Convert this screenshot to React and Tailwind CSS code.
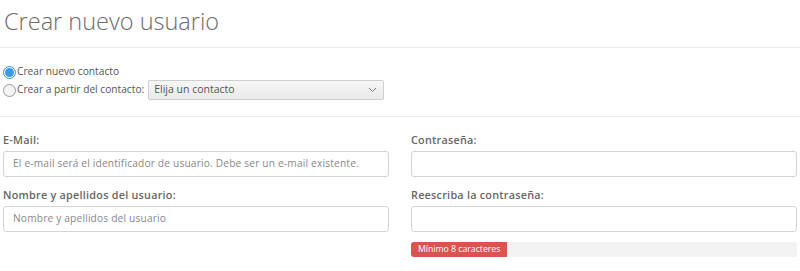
import React from "react";

function Radio({ checked }) {
  return checked ? (
    <span className="w-[13px] h-[13px] rounded-full border border-[#3b8fd6] bg-white flex items-center justify-center shrink-0">
      <span className="w-[9px] h-[9px] rounded-full bg-[#3a9be8]" />
    </span>
  ) : (
    <span className="w-[13px] h-[13px] rounded-full border border-[#9a9a9a] bg-[#f4f4f4] shrink-0" />
  );
}

function Field({ label, placeholder }) {
  return (
    <div className="flex flex-col">
      <div className="h-[14px] leading-[14px] text-[10.8px] font-semibold tracking-[0.25px] text-[#666]">
        {label}
      </div>
      <div className="h-[26px] mt-[4px] border border-[#d4d4d4] rounded-[3px] bg-white flex items-center px-[9px] text-[10.2px] tracking-[0.17px] text-[#888] whitespace-nowrap">
        {placeholder}
      </div>
    </div>
  );
}

export default function App() {
  return (
    <div className="w-[800px] h-[271px] bg-white px-[3px] font-['Open_Sans',sans-serif] overflow-hidden">
      <h1 className="h-[47px] pt-[5px] pl-[1px] text-[23.5px] font-light text-[#6b6b6b] leading-[32px]">
        Crear nuevo usuario
      </h1>
      <div className="border-t border-[#ececec] -mx-[3px]" />

      <div className="pt-[16px] flex flex-col">
        <label className="flex items-center gap-[1px] h-[16px] text-[10.2px] text-[#555]">
          <Radio checked />
          <span>Crear nuevo contacto</span>
        </label>
        <label className="flex items-center gap-[1px] h-[22px] -mt-[1px] text-[10.2px] text-[#555]">
          <Radio />
          <span>Crear a partir del contacto:</span>
          <div className="ml-[3px] w-[236px] h-[20px] border border-[#cfcfcf] rounded-[2px] bg-gradient-to-b from-[#f7f7f7] to-[#e9e9e9] flex items-center justify-between pl-[5px] pr-[6px] text-[10.5px] text-[#555]">
            <span>Elija un contacto</span>
            <svg width="9" height="6" viewBox="0 0 9 6" fill="none" stroke="#777" strokeWidth="1">
              <path d="M1 1l3.5 3.5L8 1" />
            </svg>
          </div>
        </label>
      </div>

      <div className="border-t border-[#ececec] mt-[15px] -mx-[3px]" />

      <div className="grid grid-cols-2 gap-x-[22px] pt-[16px]">
        <div className="flex flex-col gap-[11px]">
          <Field label="E-Mail:" placeholder="El e-mail será el identificador de usuario. Debe ser un e-mail existente." />
          <Field label="Nombre y apellidos del usuario:" placeholder="Nombre y apellidos del usuario" />
        </div>
        <div className="flex flex-col">
          <div className="flex flex-col gap-[11px]">
            <Field label="Contraseña:" placeholder="" />
            <Field label="Reescriba la contraseña:" placeholder="" />
          </div>
          <div className="mt-[10px] h-[15px] rounded-[3px] bg-[#f3f3f3] overflow-hidden flex">
            <div className="w-[96px] h-full bg-[#d9534f] text-white text-[8.7px] leading-[15px] pl-[7px] whitespace-nowrap">
              Mínimo 8 caracteres
            </div>
          </div>
        </div>
      </div>
    </div>
  );
}
